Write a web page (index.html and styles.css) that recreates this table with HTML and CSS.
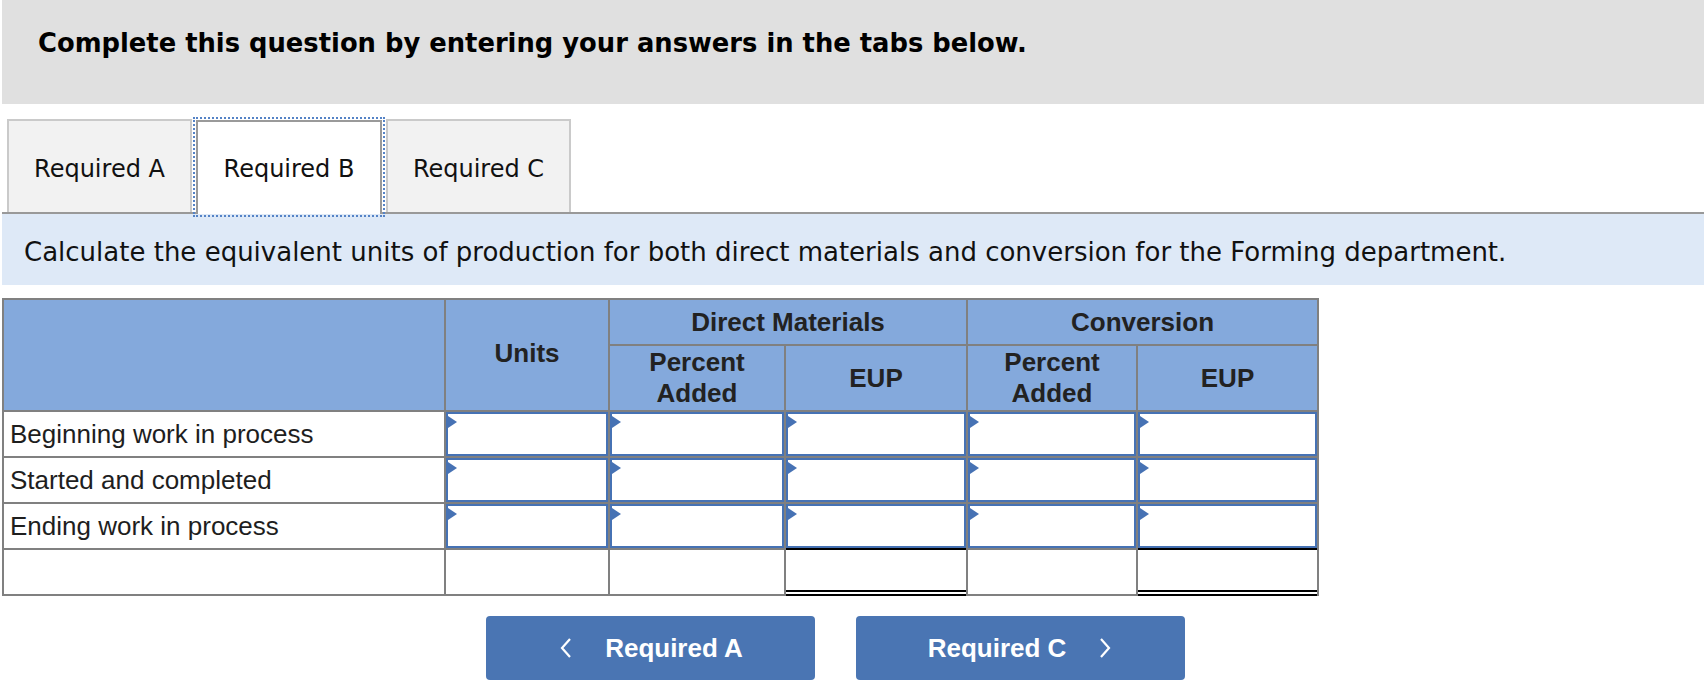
FILE: index.html
```html
<!DOCTYPE html>
<html lang="en">
<head>
<meta charset="utf-8">
<title>Required B</title>
<link rel="stylesheet" href="styles.css">
</head>
<body>
<div class="page">
  <div class="header">
    <h1 class="title">Complete this question by entering your answers in the tabs below.</h1>
  </div>

  <div class="tabs">
    <div class="tab">Required A</div>
    <div class="tab active">Required B</div>
    <div class="tab">Required C</div>
  </div>

  <div class="instruction">Calculate the equivalent units of production for both direct materials and conversion for the Forming department.</div>

  <div class="grid">
    <div class="hc h-label"></div>
    <div class="hc h-units">Units</div>
    <div class="hc h-dm">Direct Materials</div>
    <div class="hc h-conv">Conversion</div>
    <div class="hc">Percent<br>Added</div>
    <div class="hc">EUP</div>
    <div class="hc">Percent<br>Added</div>
    <div class="hc">EUP</div>

    <div class="label">Beginning work in process</div>
    <div class="inp"></div><div class="inp"></div><div class="inp"></div><div class="inp"></div><div class="inp"></div>

    <div class="label">Started and completed</div>
    <div class="inp"></div><div class="inp"></div><div class="inp"></div><div class="inp"></div><div class="inp"></div>

    <div class="label">Ending work in process</div>
    <div class="inp"></div><div class="inp"></div><div class="inp"></div><div class="inp"></div><div class="inp"></div>

    <div class="blank"></div>
    <div class="blank"></div>
    <div class="blank"></div>
    <div class="blank"><div class="total"></div></div>
    <div class="blank"></div>
    <div class="blank"><div class="total"></div></div>
  </div>

  <div class="nav">
    <button class="btn" type="button">
      <svg class="chev" width="16" height="22" viewBox="0 0 16 22"><polyline points="12,2 4,11 12,20" fill="none" stroke="#fff" stroke-width="2.2"/></svg>
      <span>Required A</span>
    </button>
    <button class="btn" type="button">
      <span>Required C</span>
      <svg class="chev" width="16" height="22" viewBox="0 0 16 22"><polyline points="4,2 12,11 4,20" fill="none" stroke="#fff" stroke-width="2.2"/></svg>
    </button>
  </div>
</div>
</body>
</html>
```

FILE: styles.css
```css
html, body {
  margin: 0;
  padding: 0;
  background: #ffffff;
}

body {
  font-family: Verdana, "DejaVu Sans", sans-serif;
  color: #111;
}

.page {
  padding-left: 2px;
  width: 1702px;
}

.header {
  background: #e0e0e0;
  height: 104px;
  box-sizing: border-box;
  padding: 28px 0 0 36px;
}

.title {
  margin: 0;
  font-size: 25.8px;
  line-height: 30px;
  font-weight: bold;
  color: #000;
}

.tabs {
  display: flex;
  align-items: flex-end;
  gap: 4px;
  margin-top: 15px;
  padding-left: 5px;
  border-bottom: 2px solid #999999;
  height: 93px;
}

.tab {
  box-sizing: border-box;
  width: 185px;
  height: 93px;
  padding-top: 4px;
  background: #f2f2f2;
  border: 2px solid #cacaca;
  border-bottom: none;
  display: flex;
  align-items: center;
  justify-content: center;
  font-size: 24px;
  color: #111;
}

.tab.active {
  width: 186px;
  height: 94px;
  padding-top: 2px;
  margin-bottom: -2px;
  background: #ffffff;
  border-color: #9a9a9a;
  outline: 2px dotted #5583c6;
  outline-offset: 1px;
}

.instruction {
  background: #dee9f7;
  height: 71px;
  box-sizing: border-box;
  padding-top: 4px;
  display: flex;
  align-items: center;
  padding-left: 22px;
  font-size: 26px;
  color: #111;
}

.grid {
  margin-top: 13px;
  display: grid;
  grid-template-columns: 440px 162px 174px 180px 168px 179px;
  grid-template-rows: 44px 64px 44px 44px 44px 44px;
  gap: 2px;
  padding: 2px;
  width: fit-content;
  background: #808080;
  font-family: Arial, "Liberation Sans", sans-serif;
  font-size: 26px;
  color: #1e1e1e;
}

.hc {
  background: #84a9dc;
  display: flex;
  align-items: center;
  justify-content: center;
  text-align: center;
  font-weight: bold;
  line-height: 31px;
  color: #222;
}

.h-label { grid-row: 1 / 3; grid-column: 1; }
.h-units { grid-row: 1 / 3; grid-column: 2; padding-bottom: 4px; box-sizing: border-box; }
.h-dm { grid-row: 1; grid-column: 3 / 5; }
.h-conv { grid-row: 1; grid-column: 5 / 7; }

.label {
  background: #ffffff;
  display: flex;
  align-items: center;
  padding-left: 6px;
  white-space: nowrap;
}

.inp {
  position: relative;
  background: #ffffff;
  border: 2px solid #4672b4;
  box-sizing: border-box;
}

.inp::before {
  content: "";
  position: absolute;
  left: 0;
  top: 2px;
  width: 0;
  height: 0;
  border-left: 9px solid #4672b4;
  border-top: 6px solid transparent;
  border-bottom: 6px solid transparent;
}

.blank {
  background: #ffffff;
  display: flex;
}

.total {
  flex: 1;
  margin: -2px 0 -2px 0;
  border-top: 2px solid #000;
  border-bottom: 6px double #000;
}

.nav {
  display: flex;
  gap: 41px;
  margin-top: 20px;
  padding-left: 484px;
}

.btn {
  width: 329px;
  height: 64px;
  border: none;
  border-radius: 4px;
  background: #4a75b3;
  color: #ffffff;
  font-family: Arial, "Liberation Sans", sans-serif;
  font-weight: bold;
  font-size: 26px;
  display: flex;
  align-items: center;
  justify-content: center;
  gap: 31px;
  padding: 0;
  cursor: pointer;
}

.chev {
  display: block;
}
```
